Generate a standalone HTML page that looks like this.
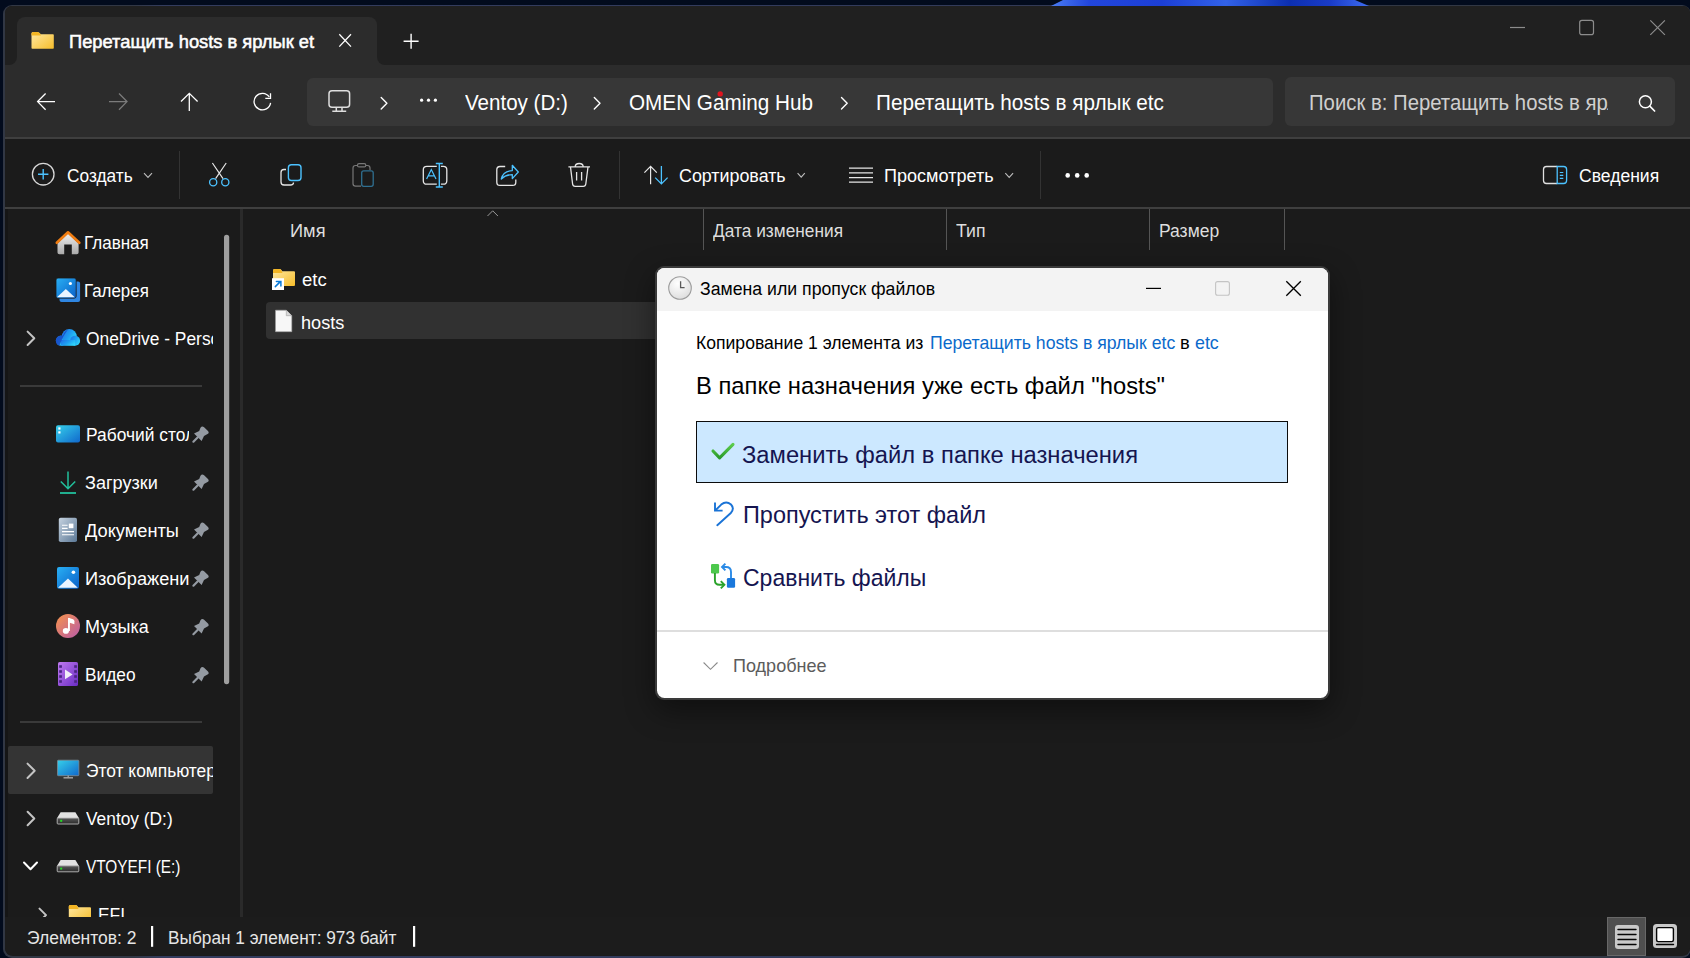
<!DOCTYPE html>
<html><head><meta charset="utf-8"><style>
*{margin:0;padding:0;box-sizing:border-box}
html,body{width:1690px;height:958px;overflow:hidden;background:#020b1d;font-family:"Liberation Sans",sans-serif}
.r{position:absolute}
.t{position:absolute;white-space:nowrap;line-height:1}
.t span{display:inline-block;transform-origin:0 0}
.ov{position:absolute;left:0;top:0}
</style></head><body>
<div class="r" style="left:3px;top:5px;width:1688px;height:953px;border-radius:9px;background:linear-gradient(90deg,#313744 0,#313744 130px,#333c5e 160px,#323b5c 900px,#313744 1400px)"></div>
<div class="r" style="left:1051px;top:0;width:318px;height:6px;background:linear-gradient(90deg,#4a7cf2 0,#2246dc 12%,#1c3fd6 35%,#3262e8 55%,#0c2fb0 75%,#1a3cc8 88%,#3d6cf0 100%);clip-path:polygon(0 100%,12px 0,304px 0,100% 100%)"></div>
<div class="r" style="left:5px;top:6px;width:1685px;height:950px;border-radius:7px 7px 8px 8px;background:#1b1b1b;overflow:hidden">
  <div class="r" style="left:0;top:0;width:1700px;height:59px;background:#202020"></div>
  <div class="r" style="left:0;top:59px;width:1700px;height:72px;background:#2c2c2c"></div>
  <div class="r" style="left:12px;top:11px;width:360px;height:60px;background:#2c2c2c;border-radius:8px 8px 0 0"></div>
  <div class="r" style="left:0;top:51px;width:12px;height:8px;background:#2c2c2c"></div>
  <div class="r" style="left:0;top:51px;width:12px;height:8px;background:#202020;border-radius:0 0 8px 0"></div>
  <div class="r" style="left:372px;top:51px;width:8px;height:8px;background:#2c2c2c"></div>
  <div class="r" style="left:372px;top:51px;width:8px;height:8px;background:#202020;border-radius:0 0 0 8px"></div>
  <div class="r" style="left:302px;top:72px;width:966px;height:48px;background:#373737;border-radius:6px"></div>
  <div class="r" style="left:1280px;top:71px;width:390px;height:48.5px;background:#373737;border-radius:6px"></div>
  <div class="r" style="left:0;top:131px;width:1700px;height:2px;background:#3f3f3f"></div>
  <div class="r" style="left:0;top:133px;width:1700px;height:68px;background:#1b1b1b"></div>
  <div class="r" style="left:173.5px;top:145px;width:1.3px;height:48px;background:#333333"></div>
  <div class="r" style="left:613.5px;top:145px;width:1.3px;height:48px;background:#333333"></div>
  <div class="r" style="left:1034.5px;top:145px;width:1.3px;height:48px;background:#333333"></div>
  <div class="r" style="left:0;top:201px;width:1700px;height:2px;background:#3f3f3f"></div>
  <div class="r" style="left:234.5px;top:203px;width:3.5px;height:708px;background:#2a2a2a"></div>
  <div class="r" style="left:697.9px;top:203px;width:1.2px;height:41px;background:#555"></div>
  <div class="r" style="left:941px;top:203px;width:1.2px;height:41px;background:#555"></div>
  <div class="r" style="left:1144px;top:203px;width:1.2px;height:41px;background:#555"></div>
  <div class="r" style="left:1279px;top:203px;width:1.2px;height:41px;background:#555"></div>
  <div class="r" style="left:261.2px;top:296.4px;width:400px;height:36.2px;background:#313131;border-radius:4px"></div>
  <div class="r" style="left:15px;top:379px;width:182px;height:2px;background:#3a3a3a"></div>
  <div class="r" style="left:15px;top:715px;width:182px;height:2px;background:#3a3a3a"></div>
  <div class="r" style="left:0;top:203px;width:3px;height:708px;background:#161616"></div>
  <div class="r" style="left:3px;top:739.8px;width:205px;height:47.8px;background:#343434;border-radius:2px"></div>
  <div class="r" style="left:0;top:911px;width:1700px;height:38px;background:#1c1c1c"></div>
</div>
<div class="r" style="left:3px;top:5px;width:0;height:0"></div>
<div class="t" id="tab" style="left:69.36px;top:32.93px;font-size:18.75px;color:#ffffff;font-weight:400;-webkit-text-stroke:0.55px #ffffff;"><span style="transform:scaleX(0.9761)">Перетащить hosts в ярлык et</span></div><div class="t" id="bc1" style="left:465.16px;top:91.55px;font-size:21.8px;color:#ffffff;font-weight:400;"><span style="transform:scaleX(0.9428)">Ventoy (D:)</span></div><div class="t" id="bc2" style="left:628.89px;top:91.55px;font-size:21.8px;color:#ffffff;font-weight:400;"><span style="transform:scaleX(0.9497)">OMEN Gaming Hub</span></div><div class="t" id="bc3" style="left:876.31px;top:91.55px;font-size:21.8px;color:#ffffff;font-weight:400;"><span style="transform:scaleX(0.9510)">Перетащить hosts в ярлык etc</span></div><div class="t" id="srch" style="left:1308.60px;top:93.09px;font-size:21.51px;color:#cfcfcf;font-weight:400;width:299.4px;overflow:hidden;"><span style="transform:scaleX(0.9450)">Поиск в: Перетащить hosts в ярлык etc</span></div><div class="t" id="tb1" style="left:67.15px;top:166.70px;font-size:18.9px;color:#ffffff;font-weight:400;"><span style="transform:scaleX(0.9150)">Создать</span></div><div class="t" id="tb2" style="left:679.31px;top:166.90px;font-size:18.9px;color:#ffffff;font-weight:400;"><span style="transform:scaleX(0.9451)">Сортировать</span></div><div class="t" id="tb3" style="left:884.15px;top:167.10px;font-size:18.9px;color:#ffffff;font-weight:400;"><span style="transform:scaleX(0.9561)">Просмотреть</span></div><div class="t" id="tb4" style="left:1578.68px;top:167.00px;font-size:18.9px;color:#ffffff;font-weight:400;"><span style="transform:scaleX(0.9288)">Сведения</span></div><div class="t" id="c1" style="left:289.89px;top:222.13px;font-size:18.75px;color:#dedede;font-weight:400;"><span style="transform:scaleX(0.9722)">Имя</span></div><div class="t" id="c2" style="left:713.16px;top:222.13px;font-size:18.75px;color:#dedede;font-weight:400;"><span style="transform:scaleX(0.9232)">Дата изменения</span></div><div class="t" id="c3" style="left:956.21px;top:222.13px;font-size:18.75px;color:#dedede;font-weight:400;"><span style="transform:scaleX(0.9435)">Тип</span></div><div class="t" id="c4" style="left:1158.89px;top:222.13px;font-size:18.75px;color:#dedede;font-weight:400;"><span style="transform:scaleX(0.9332)">Размер</span></div><div class="t" id="f1" style="left:301.68px;top:271.33px;font-size:18.75px;color:#ffffff;font-weight:400;"><span style="transform:scaleX(0.9853)">etc</span></div><div class="t" id="f2" style="left:301.36px;top:313.93px;font-size:18.75px;color:#ffffff;font-weight:400;"><span style="transform:scaleX(0.9671)">hosts</span></div><div class="t" id="s1" style="left:84.36px;top:234.00px;font-size:18.9px;color:#ffffff;font-weight:400;"><span style="transform:scaleX(0.9015)">Главная</span></div><div class="t" id="s2" style="left:84.36px;top:282.00px;font-size:18.9px;color:#ffffff;font-weight:400;"><span style="transform:scaleX(0.8945)">Галерея</span></div><div class="t" id="s3" style="left:85.80px;top:330.00px;font-size:18.9px;color:#ffffff;font-weight:400;width:127.2px;overflow:hidden;"><span style="transform:scaleX(0.9200)">OneDrive - Personal</span></div><div class="t" id="s4" style="left:86.00px;top:426.00px;font-size:18.9px;color:#ffffff;font-weight:400;width:103.0px;overflow:hidden;"><span style="transform:scaleX(0.9200)">Рабочий стол</span></div><div class="t" id="s5" style="left:84.89px;top:474.00px;font-size:18.9px;color:#ffffff;font-weight:400;"><span style="transform:scaleX(0.9569)">Загрузки</span></div><div class="t" id="s6" style="left:85.00px;top:522.00px;font-size:18.9px;color:#ffffff;font-weight:400;"><span style="transform:scaleX(0.9650)">Документы</span></div><div class="t" id="s7" style="left:84.89px;top:570.00px;font-size:18.9px;color:#ffffff;font-weight:400;width:103.8px;overflow:hidden;"><span style="transform:scaleX(0.9632)">Изображени</span></div><div class="t" id="s8" style="left:84.89px;top:618.00px;font-size:18.9px;color:#ffffff;font-weight:400;"><span style="transform:scaleX(0.9532)">Музыка</span></div><div class="t" id="s9" style="left:84.89px;top:666.00px;font-size:18.9px;color:#ffffff;font-weight:400;"><span style="transform:scaleX(0.9167)">Видео</span></div><div class="t" id="s10" style="left:85.50px;top:762.00px;font-size:18.9px;color:#ffffff;font-weight:400;width:127.5px;overflow:hidden;"><span style="transform:scaleX(0.9200)">Этот компьютер</span></div><div class="t" id="s11" style="left:85.58px;top:810.00px;font-size:18.9px;color:#ffffff;font-weight:400;"><span style="transform:scaleX(0.9173)">Ventoy (D:)</span></div><div class="t" id="s12" style="left:85.58px;top:858.00px;font-size:18.9px;color:#ffffff;font-weight:400;"><span style="transform:scaleX(0.8131)">VTOYEFI (E:)</span></div><div class="r" style="left:0;top:880px;width:240px;height:37px;overflow:hidden"><div class="t" id="s13" style="left:97.8px;top:26.00px;font-size:18.9px;color:#fff"><span style="transform:scaleX(0.92)">EFI</span></div></div><div class="t" id="st1" style="left:26.57px;top:928.80px;font-size:18.9px;color:#e6e6e6;font-weight:400;"><span style="transform:scaleX(0.9248)">Элементов: 2</span></div><div class="t" id="st2" style="left:167.94px;top:928.80px;font-size:18.9px;color:#e6e6e6;font-weight:400;"><span style="transform:scaleX(0.9131)">Выбран 1 элемент: 973 байт</span></div>

<svg class="ov" width="1690" height="958" viewBox="0 0 1690 958">
<defs>
 <linearGradient id="gFold" x1="0" y1="0" x2="1" y2="1"><stop offset="0" stop-color="#ffe9a6"/><stop offset="1" stop-color="#f6bd2a"/></linearGradient>
 <linearGradient id="gHome" x1="0" y1="0" x2="0" y2="1"><stop offset="0" stop-color="#efefef"/><stop offset="1" stop-color="#a9a9a9"/></linearGradient>
 <linearGradient id="gBlue" x1="0" y1="0" x2="1" y2="1"><stop offset="0" stop-color="#29b0f4"/><stop offset="1" stop-color="#0a5fc8"/></linearGradient>
 <linearGradient id="gDesk" x1="0" y1="0" x2="1" y2="1"><stop offset="0" stop-color="#36d0ea"/><stop offset="1" stop-color="#1068cc"/></linearGradient>
 <linearGradient id="gDoc" x1="0" y1="0" x2="1" y2="1"><stop offset="0" stop-color="#c6d3e0"/><stop offset="1" stop-color="#5b7896"/></linearGradient>
 <linearGradient id="gMus" x1="0" y1="0" x2="1" y2="1"><stop offset="0" stop-color="#f7944a"/><stop offset="1" stop-color="#b85aa8"/></linearGradient>
 <linearGradient id="gVid" x1="0" y1="0" x2="1" y2="1"><stop offset="0" stop-color="#c07af0"/><stop offset="1" stop-color="#6a2cc4"/></linearGradient>
 <linearGradient id="gCloud" x1="0" y1="0" x2="1" y2="0.6"><stop offset="0" stop-color="#1f6ee6"/><stop offset="0.55" stop-color="#1ea0f2"/><stop offset="1" stop-color="#2fd2f8"/></linearGradient>
 <linearGradient id="gDrv" x1="0" y1="0" x2="0" y2="1"><stop offset="0" stop-color="#5a5a5a"/><stop offset="1" stop-color="#2a2a2a"/></linearGradient>
</defs>
<!-- tab folder -->
<path d="M31.5 33.5 Q31.5 32 33 32 L37.5 32 Q39 32 40 33.5 L40.5 34.3 L53 34.3 Q53.8 34.3 53.8 35 L53.8 48 Q53.8 48.8 53 48.8 L32.3 48.8 Q31.5 48.8 31.5 48 Z" fill="url(#gFold)"/>
<path d="M31.5 33.5 Q31.5 32 33 32 L37.5 32 Q39 32 40 33.5 L41 35.6 L31.5 35.6 Z" fill="#f3b524"/>
<!-- tab close -->
<path d="M339.3 34.3 L351 46.6 M351 34.3 L339.3 46.6" stroke="#ffffff" stroke-width="1.3"/>
<path d="M403.6 41.2 L418.6 41.2 M411.1 33.7 L411.1 48.7" stroke="#ffffff" stroke-width="1.4"/>
<!-- window controls -->
<path d="M1510 27.5 L1525 27.5" stroke="#8c8c8c" stroke-width="1.2"/>
<rect x="1579.7" y="20.4" width="13.8" height="14.2" rx="2.2" fill="none" stroke="#8c8c8c" stroke-width="1.2"/>
<path d="M1650.3 20.3 L1664.9 34.9 M1664.9 20.3 L1650.3 34.9" stroke="#8c8c8c" stroke-width="1.2"/>
<!-- nav arrows -->
<path d="M37.6 101.6 L55 101.6 M45.6 93.5 L37.6 101.6 L45.6 109.7" fill="none" stroke="#ffffff" stroke-width="1.3"/>
<path d="M127 101.6 L109 101.6 M119 93.5 L127 101.6 L119 109.7" fill="none" stroke="#7b7b7b" stroke-width="1.3"/>
<path d="M189.3 111 L189.3 93.3 M181 101.5 L189.3 93.3 L197.6 101.5" fill="none" stroke="#ffffff" stroke-width="1.3"/>
<path d="M269.3 97 A8.3 8.3 0 1 0 270.6 102.8" fill="none" stroke="#ffffff" stroke-width="1.3"/>
<path d="M270.5 93.3 L270.5 98.3 L265.3 98.3" fill="none" stroke="#ffffff" stroke-width="1.3"/>
<!-- address bar -->
<rect x="329" y="90.8" width="20.6" height="16.4" rx="3" fill="none" stroke="#dedede" stroke-width="1.5"/>
<path d="M336.3 107.5 L336.3 110.5 M342 107.5 L342 110.5 M332.3 111.3 L346.2 111.3" stroke="#dedede" stroke-width="1.5"/>
<path d="M381.2 97.6 L386.90 103.30 L381.2 109.0" fill="none" stroke="#ffffff" stroke-width="1.4" stroke-linecap="round" stroke-linejoin="round"/>
<circle cx="421.6" cy="100.2" r="1.6" fill="#ffffff"/><circle cx="428.5" cy="100.2" r="1.6" fill="#ffffff"/><circle cx="435.4" cy="100.2" r="1.6" fill="#ffffff"/>
<path d="M594.3 97.6 L600.00 103.30 L594.3 109.0" fill="none" stroke="#ffffff" stroke-width="1.4" stroke-linecap="round" stroke-linejoin="round"/>
<path d="M841.5 97.6 L847.20 103.30 L841.5 109.0" fill="none" stroke="#ffffff" stroke-width="1.4" stroke-linecap="round" stroke-linejoin="round"/>
<circle cx="720.2" cy="93.9" r="2.7" fill="#e0141e"/>
<circle cx="1645.4" cy="101.8" r="6" fill="none" stroke="#ffffff" stroke-width="1.5"/>
<path d="M1649.8 106.2 L1654.6 111" stroke="#ffffff" stroke-width="1.7" stroke-linecap="round"/>
<!-- toolbar icons -->
<circle cx="43.2" cy="174.2" r="10.8" fill="none" stroke="#d8d8d8" stroke-width="1.3"/>
<path d="M43.2 169 L43.2 179.4 M38 174.2 L48.4 174.2" stroke="#4cc2ff" stroke-width="1.4"/>
<path d="M144 173.2 L148 177.4 L152 173.2" fill="none" stroke="#bdbdbd" stroke-width="1.1"/>
<path d="M212.4 163 L223 178.6 M226.2 163 L215.6 178.6" stroke="#e6e6e6" stroke-width="1.2"/>
<circle cx="213.2" cy="182.3" r="3.6" fill="none" stroke="#4cc2ff" stroke-width="1.3"/>
<circle cx="225.3" cy="182.3" r="3.6" fill="none" stroke="#4cc2ff" stroke-width="1.3"/>
<path d="M286 169.5 L284 169.5 Q281 169.5 281 172.5 L281 182 Q281 185 284 185 L290.5 185 Q293.5 185 293.5 182.5" fill="none" stroke="#e6e6e6" stroke-width="1.3"/>
<rect x="288.4" y="164.7" width="12.6" height="15.8" rx="3" fill="none" stroke="#4cc2ff" stroke-width="1.4"/>
<path d="M357 165.5 L355.5 165.5 Q353 165.5 353 168 L353 183.5 Q353 186.2 355.5 186.2 L361 186.2 M366 165.5 L367.5 165.5 Q370 165.5 370 168 L370 170" fill="none" stroke="#777777" stroke-width="1.2"/>
<rect x="357.5" y="163.7" width="8.3" height="3.2" rx="1.5" fill="none" stroke="#777777" stroke-width="1.2"/>
<rect x="361.7" y="170.8" width="11.5" height="15.5" rx="2" fill="none" stroke="#2f6f90" stroke-width="1.3"/>
<path d="M436.8 166.3 L426.8 166.3 Q423.3 166.3 423.3 169.8 L423.3 180.7 Q423.3 184.2 426.8 184.2 L436.8 184.2 M440.9 166.3 L443.3 166.3 Q446.8 166.3 446.8 169.8 L446.8 180.7 Q446.8 184.2 443.3 184.2 L440.9 184.2" fill="none" stroke="#e6e6e6" stroke-width="1.3"/>
<path d="M439.3 163.5 L439.3 187 M435.8 163.5 L442.8 163.5 M435.8 187 L442.8 187" stroke="#4cc2ff" stroke-width="1.4"/>
<path d="M426.6 179 L431.3 169.5 L436 179 M428.3 175.8 L434.4 175.8" fill="none" stroke="#4cc2ff" stroke-width="1.2"/>
<path d="M505.2 166.5 L500 166.5 Q496.8 166.5 496.8 169.7 L496.8 182.2 Q496.8 185.4 500 185.4 L512.6 185.4 Q515.8 185.4 515.8 182.2 L515.8 179.6" fill="none" stroke="#e6e6e6" stroke-width="1.3"/>
<path d="M501.3 179 Q503 171 512.3 170.6 L512.3 165.3 L518.3 172 L512.3 178.6 L512.3 174.6 Q505.5 174.6 501.3 179 Z" fill="none" stroke="#4cc2ff" stroke-width="1.3" stroke-linejoin="round"/>
<path d="M568.4 166.8 L590 166.8 M575.2 166.8 Q575.2 163.5 579.2 163.5 Q583.2 163.5 583.2 166.8" fill="none" stroke="#e6e6e6" stroke-width="1.3"/>
<path d="M570.5 167 L572.6 184 Q572.9 186.3 575.2 186.3 L583.2 186.3 Q585.5 186.3 585.8 184 L588 167" fill="none" stroke="#e6e6e6" stroke-width="1.3"/>
<path d="M576.6 172 L576.6 180.5 M581.6 172 L581.6 180.5" stroke="#e6e6e6" stroke-width="1.3"/>
<path d="M650.6 184.2 L650.6 166.2 M644.4 172.6 L650.6 166.3 L656.8 172.6" fill="none" stroke="#e6e6e6" stroke-width="1.2"/>
<path d="M661.4 166 L661.4 184 M655.2 177.6 L661.4 183.9 L667.6 177.6" fill="none" stroke="#4cc2ff" stroke-width="1.3"/>
<path d="M797.6 173.2 L801.2 177.2 L804.8 173.2" fill="none" stroke="#bdbdbd" stroke-width="1.1"/>
<path d="M849 168.2 L873 168.2 M849 172.9 L873 172.9 M849 177.6 L873 177.6 M849 182.2 L873 182.2" stroke="#e6e6e6" stroke-width="1.3"/>
<path d="M1005.3 173.2 L1009.2 177.4 L1013.1 173.2" fill="none" stroke="#bdbdbd" stroke-width="1.1"/>
<circle cx="1067.7" cy="175.4" r="2.3" fill="#ffffff"/><circle cx="1077.2" cy="175.4" r="2.3" fill="#ffffff"/><circle cx="1086.7" cy="175.4" r="2.3" fill="#ffffff"/>
<path d="M1557.2 166.5 L1546.5 166.5 Q1543.5 166.5 1543.5 169.5 L1543.5 180.5 Q1543.5 183.5 1546.5 183.5 L1557.2 183.5" fill="none" stroke="#e0e0e0" stroke-width="1.3"/>
<path d="M1557.2 166.5 L1563.6 166.5 Q1566.6 166.5 1566.6 169.5 L1566.6 180.5 Q1566.6 183.5 1563.6 183.5 L1557.2 183.5 Z" fill="none" stroke="#4cc2ff" stroke-width="1.3"/>
<path d="M1559.8 172.5 L1563.3 172.5 M1559.8 175.4 L1563.3 175.4 M1559.8 178.4 L1563.3 178.4" stroke="#4cc2ff" stroke-width="1.1"/>
<!-- column sort caret -->
<path d="M487.5 216 L492.7 210.8 L497.9 216" fill="none" stroke="#9a9a9a" stroke-width="1"/>
<!-- etc folder w/ shortcut -->
<path d="M273 270.5 Q273 269 274.5 269 L279.5 269 Q280.5 269 281.3 270 L282.3 271.3 L294 271.3 Q295 271.3 295 272.3 L295 285 Q295 286 294 286 L274 286 Q273 286 273 285 Z" fill="url(#gFold)"/>
<path d="M273 270.5 Q273 269 274.5 269 L279.5 269 Q280.5 269 281.3 270 L282.5 273 L273 273 Z" fill="#f3b524"/>
<rect x="272" y="278.2" width="12" height="11.8" fill="#ffffff"/>
<path d="M275.3 286.6 L280.3 281.6 M276.4 281.4 L280.9 281.4 L280.9 285.9" fill="none" stroke="#0a7ad8" stroke-width="1.5" stroke-linecap="round"/>
<!-- hosts file icon -->
<path d="M275.5 310.2 L286.3 310.2 L291.8 315.7 L291.8 331.7 L275.5 331.7 Z" fill="#f7f7f7" stroke="#9c9c9c" stroke-width="0.6"/>
<path d="M286.3 310.2 L286.3 315.7 L291.8 315.7" fill="#d8d8d8" stroke="#9c9c9c" stroke-width="0.6"/>
<!-- sidebar icons -->
<path d="M57.5 243.5 L57.5 252.5 Q57.5 254.3 59.3 254.3 L64.2 254.3 L64.2 244.4 L71.8 244.4 L71.8 254.3 L76.8 254.3 Q78.6 254.3 78.6 252.5 L78.6 243.5 L68 233.5 Z" fill="url(#gHome)"/>
<path d="M56.8 242.8 L68 232.3 L79.3 242.8" fill="none" stroke="#f07d12" stroke-width="2.6" stroke-linecap="round" stroke-linejoin="round"/>
<rect x="59.5" y="281.5" width="20.6" height="20.4" rx="2" fill="#2f86e2"/>
<rect x="56" y="278" width="20.2" height="20.2" rx="2" fill="url(#gBlue)" stroke="#1b1b1b" stroke-width="0.8"/>
<path d="M57 297.2 L65.8 289 L74.8 297.2 Z" fill="#eaf4ff"/>
<circle cx="70.4" cy="283.5" r="1.6" fill="#ffffff"/>
<g fill="url(#gCloud)"><circle cx="61" cy="340.6" r="5.2"/><circle cx="69.3" cy="336.6" r="7.5"/><circle cx="75.1" cy="340.8" r="5"/><rect x="61" y="340" width="14.2" height="5.8"/></g>
<path d="M57 337.6 Q59.5 335.2 63 335.6 Q64.5 331 68 329.4 Q62 337 59.5 345.6 Q56 345 55.9 341 Q56 339 57 337.6 Z" fill="#1642c0" opacity="0.75"/>
<path d="M27.6 331.6 L34.30 338.30 L27.6 345.0" fill="none" stroke="#c4c4c4" stroke-width="2" stroke-linecap="round" stroke-linejoin="round"/>
<rect x="56" y="425.2" width="24" height="17.2" rx="2" fill="url(#gDesk)"/>
<rect x="58.3" y="427.4" width="2.2" height="2.2" fill="#ffffff"/><rect x="58.3" y="431.3" width="2.2" height="2.2" fill="#ffffff"/>
<path d="M68 471.4 L68 488.8 M60.8 481.5 L68 488.8 L75.2 481.5" fill="none" stroke="#22c09c" stroke-width="1.5"/>
<path d="M60 493 L76 493" stroke="#22c09c" stroke-width="1.8"/>
<rect x="58.8" y="517.8" width="18.2" height="24.2" rx="1.8" fill="url(#gDoc)"/>
<path d="M62 525.3 L67.6 525.3 M62 528.4 L67.6 528.4 M62 531.6 L74 531.6 M62 534.7 L74 534.7" stroke="#ffffff" stroke-width="1.1"/>
<rect x="68.8" y="523.6" width="4.6" height="4.6" fill="#ffffff"/>
<rect x="57" y="567" width="22" height="21.8" rx="2" fill="url(#gBlue)"/>
<path d="M58 587.8 L68 578.6 L77.8 587.8 Z" fill="#eaf4ff"/>
<circle cx="73.4" cy="572.2" r="1.8" fill="#ffffff"/>
<circle cx="68" cy="626" r="12" fill="url(#gMus)"/>
<rect x="68" y="618" width="1.9" height="13" fill="#ffffff"/>
<path d="M68.5 617.8 L73 619.3 Q74.4 619.8 74.4 621.2 L74.4 624.2 L69 622.6 Z" fill="#ffffff"/>
<ellipse cx="65.9" cy="630.9" rx="3.1" ry="2.8" fill="#ffffff"/>
<rect x="58" y="662" width="20" height="24" rx="1.6" fill="url(#gVid)"/>
<g fill="#4a2482"><rect x="59.2" y="665.2" width="2.7" height="2.6"/><rect x="59.2" y="670.2" width="2.7" height="2.6"/><rect x="59.2" y="675.2" width="2.7" height="2.6"/><rect x="59.2" y="680.2" width="2.7" height="2.6"/><rect x="74.2" y="665.2" width="2.7" height="2.6"/><rect x="74.2" y="670.2" width="2.7" height="2.6"/><rect x="74.2" y="675.2" width="2.7" height="2.6"/><rect x="74.2" y="680.2" width="2.7" height="2.6"/></g>
<path d="M65 669.6 L72.6 674.4 L65 679.2 Z" fill="#f2eef8"/>
<g transform="translate(193,422)"><path d="M1 11.4 L6.2 9 L7.5 5.8 Q9 3.6 11.1 5.2 L15 8.9 Q16.6 10.8 14.5 12.1 L11 14 L8.6 19 Z" fill="#949aa2"/><path d="M4.8 15.3 L0.4 19.7" stroke="#949aa2" stroke-width="2.2" stroke-linecap="round"/></g><g transform="translate(193,470)"><path d="M1 11.4 L6.2 9 L7.5 5.8 Q9 3.6 11.1 5.2 L15 8.9 Q16.6 10.8 14.5 12.1 L11 14 L8.6 19 Z" fill="#949aa2"/><path d="M4.8 15.3 L0.4 19.7" stroke="#949aa2" stroke-width="2.2" stroke-linecap="round"/></g><g transform="translate(193,518)"><path d="M1 11.4 L6.2 9 L7.5 5.8 Q9 3.6 11.1 5.2 L15 8.9 Q16.6 10.8 14.5 12.1 L11 14 L8.6 19 Z" fill="#949aa2"/><path d="M4.8 15.3 L0.4 19.7" stroke="#949aa2" stroke-width="2.2" stroke-linecap="round"/></g><g transform="translate(193,566)"><path d="M1 11.4 L6.2 9 L7.5 5.8 Q9 3.6 11.1 5.2 L15 8.9 Q16.6 10.8 14.5 12.1 L11 14 L8.6 19 Z" fill="#949aa2"/><path d="M4.8 15.3 L0.4 19.7" stroke="#949aa2" stroke-width="2.2" stroke-linecap="round"/></g><g transform="translate(193,614.5)"><path d="M1 11.4 L6.2 9 L7.5 5.8 Q9 3.6 11.1 5.2 L15 8.9 Q16.6 10.8 14.5 12.1 L11 14 L8.6 19 Z" fill="#949aa2"/><path d="M4.8 15.3 L0.4 19.7" stroke="#949aa2" stroke-width="2.2" stroke-linecap="round"/></g><g transform="translate(193,662.5)"><path d="M1 11.4 L6.2 9 L7.5 5.8 Q9 3.6 11.1 5.2 L15 8.9 Q16.6 10.8 14.5 12.1 L11 14 L8.6 19 Z" fill="#949aa2"/><path d="M4.8 15.3 L0.4 19.7" stroke="#949aa2" stroke-width="2.2" stroke-linecap="round"/></g>
<path d="M27.5 763.6 L34.70 770.80 L27.5 778.0" fill="none" stroke="#c4c4c4" stroke-width="2" stroke-linecap="round" stroke-linejoin="round"/>
<rect x="57.5" y="760.2" width="21.4" height="15.5" rx="0.8" fill="url(#gDesk)" stroke="#7c8a94" stroke-width="0.8"/>
<path d="M63.5 777.8 L73 777.8" stroke="#a8a8a8" stroke-width="1.4"/>
<path d="M68.2 775.5 L68.2 777.5" stroke="#a8a8a8" stroke-width="1.2"/>
<path d="M27.6 811.8 L34.30 818.50 L27.6 825.1999999999999" fill="none" stroke="#c4c4c4" stroke-width="2" stroke-linecap="round" stroke-linejoin="round"/>
<path d="M57 818.2 L60.6 812.3 L75.4 812.3 L79 818.2 Z" fill="#e2e2e2"/>
<rect x="57.2" y="818" width="21.6" height="6" rx="0.8" fill="url(#gDrv)" stroke="#bdbdbd" stroke-width="0.9"/>
<rect x="60.2" y="819.8" width="2" height="2" fill="#22e022"/>
<path d="M24 862.5 L30.5 869.2 L37 862.5" fill="none" stroke="#ffffff" stroke-width="2" stroke-linecap="round" stroke-linejoin="round"/>
<path d="M57 866 L60.6 860.1 L75.4 860.1 L79 866 Z" fill="#e2e2e2"/>
<rect x="57.2" y="865.8" width="21.6" height="6" rx="0.8" fill="url(#gDrv)" stroke="#bdbdbd" stroke-width="0.9"/>
<rect x="60.2" y="867.6" width="2" height="2" fill="#22e022"/>
<g clip-path="url(#clipSB)">
<path d="M39.5 908.6 L46.00 915.10 L39.5 921.6" fill="none" stroke="#c4c4c4" stroke-width="2" stroke-linecap="round" stroke-linejoin="round"/>
<path d="M68.8 906.5 Q68.8 905 70.3 905 L75.5 905 Q76.5 905 77.3 906 L78.3 907.3 L90 907.3 Q91 907.3 91 908.3 L91 921 Q91 922 90 922 L69.8 922 Q68.8 922 68.8 921 Z" fill="url(#gFold)"/>
<path d="M68.8 906.5 Q68.8 905 70.3 905 L75.5 905 Q76.5 905 77.3 906 L78.5 909 L68.8 909 Z" fill="#f3b524"/>
</g>
<clipPath id="clipSB"><rect x="0" y="0" width="240" height="917"/></clipPath>
<!-- scrollbar -->
<rect x="224" y="234.7" width="5.2" height="449.5" rx="2.6" fill="#9f9f9f"/>
<!-- status bar -->
<rect x="151" y="926" width="2.2" height="20.8" fill="#ffffff"/>
<rect x="413" y="926" width="2.2" height="20.8" fill="#ffffff"/>
<rect x="1607.5" y="917.5" width="38" height="38" fill="#4f4f4f" stroke="#686868" stroke-width="1"/>
<rect x="1615" y="925" width="24" height="24" rx="3" fill="#c9c9c9"/>
<path d="M1618 929.5 L1636 929.5 M1618 934.5 L1636 934.5 M1618 939.5 L1636 939.5 M1618 944.5 L1636 944.5" stroke="#050505" stroke-width="1.4" stroke-linecap="round"/>
<rect x="1653" y="924" width="24" height="24" rx="3.5" fill="#c9c9c9"/>
<rect x="1656.6" y="927.6" width="16.8" height="14" rx="1.5" fill="#ffffff" stroke="#050505" stroke-width="1.4"/>
<path d="M1656.5 944.5 L1673.5 944.5" stroke="#050505" stroke-width="1.4" stroke-linecap="round"/>
</svg>

<div class="r" style="left:655px;top:266px;width:674.5px;height:434px;border-radius:9px;background:#3a3a3a;box-shadow:0 10px 30px rgba(0,0,0,0.45)"></div>
<div class="r" style="left:657px;top:268px;width:670.8px;height:430px;border-radius:7.5px;background:#ffffff;overflow:hidden">
  <div class="r" style="left:0;top:0;width:680px;height:43px;background:#f3f3f3"></div>
  <div class="r" style="left:39.2px;top:153.2px;width:592px;height:61.6px;background:#cce8ff;border:1.1px solid #0c0c0c"></div>
  <div class="r" style="left:0;top:362px;width:680px;height:1.6px;background:#dedede"></div>
</div>
<div class="t" id="d1" style="left:700.15px;top:280.96px;font-size:17.88px;color:#000000;font-weight:400;"><span style="transform:scaleX(0.9906)">Замена или пропуск файлов</span></div><div class="t" id="d2a" style="left:696.47px;top:334.69px;font-size:17.73px;color:#000000;font-weight:400;"><span style="transform:scaleX(0.9924)">Копирование 1 элемента из</span></div><div class="t" id="d2b" style="left:929.68px;top:334.69px;font-size:17.73px;color:#0b6acb;font-weight:400;"><span style="transform:scaleX(0.9967)">Перетащить hosts в ярлык etc</span></div><div class="t" id="d2c" style="left:1179.89px;top:334.69px;font-size:17.73px;color:#000000;font-weight:400;"><span style="transform:scaleX(1.0299)">в</span></div><div class="t" id="d2d" style="left:1194.52px;top:334.69px;font-size:17.73px;color:#0b6acb;font-weight:400;"><span style="transform:scaleX(1.0052)">etc</span></div><div class="t" id="d3" style="left:695.78px;top:374.26px;font-size:24.27px;color:#000000;font-weight:400;"><span style="transform:scaleX(0.9790)">В папке назначения уже есть файл "hosts"</span></div><div class="t" id="o1" style="left:742.36px;top:442.60px;font-size:23.98px;color:#151550;font-weight:400;"><span style="transform:scaleX(0.9909)">Заменить файл в папке назначения</span></div><div class="t" id="o2" style="left:742.78px;top:504.46px;font-size:23.55px;color:#151550;font-weight:400;"><span style="transform:scaleX(0.9958)">Пропустить этот файл</span></div><div class="t" id="o3" style="left:743.10px;top:566.56px;font-size:23.55px;color:#151550;font-weight:400;"><span style="transform:scaleX(0.9762)">Сравнить файлы</span></div><div class="t" id="d4" style="left:733.10px;top:657.06px;font-size:18.6px;color:#5c5c5c;font-weight:400;"><span style="transform:scaleX(0.9697)">Подробнее</span></div>

<svg class="ov" width="1690" height="958" viewBox="0 0 1690 958">
<defs>
 <radialGradient id="gClk" cx="0.4" cy="0.3" r="0.8"><stop offset="0" stop-color="#ffffff"/><stop offset="1" stop-color="#dadada"/></radialGradient>
 <linearGradient id="gChk" x1="0" y1="0" x2="0" y2="1"><stop offset="0" stop-color="#5ccc4c"/><stop offset="1" stop-color="#2a9a2a"/></linearGradient>
</defs>
<circle cx="680" cy="288" r="11.3" fill="url(#gClk)" stroke="#9c9c9c" stroke-width="1.1"/>
<path d="M680.6 281.3 L680.6 287.6 L684.6 287.6" fill="none" stroke="#5a5a5a" stroke-width="1.3"/>
<path d="M1146 288.4 L1161 288.4" stroke="#000" stroke-width="1.2"/>
<rect x="1215.6" y="281.6" width="13.8" height="13.6" rx="2" fill="none" stroke="#c4c4c4" stroke-width="1.1"/>
<path d="M1286.3 281.2 L1300.8 295.8 M1300.8 281.2 L1286.3 295.8" stroke="#000" stroke-width="1.3"/>
<path d="M713 451 L719.6 457.8 L733 444.3" fill="none" stroke="url(#gChk)" stroke-width="3.1" stroke-linecap="round" stroke-linejoin="round"/>
<path d="M715 502.6 L715 510.6 L722.6 510.6" fill="none" stroke="#1a73d6" stroke-width="1.9" stroke-linejoin="miter"/>
<path d="M715.8 510 L721.2 504.6 Q726.2 500.4 731 504.5 Q734.8 508.6 730.8 513 L717.3 525.2" fill="none" stroke="#1a73d6" stroke-width="1.9" stroke-linecap="round"/>
<rect x="711" y="563.9" width="8.1" height="9.6" rx="1.3" fill="#4cc84c"/>
<rect x="726.9" y="578" width="8.2" height="9.7" rx="1.3" fill="#1a78dc"/>
<path d="M714.9 573 L714.9 580 Q714.9 584.8 719.5 584.8 L723.8 584.8" fill="none" stroke="#2aa22a" stroke-width="1.9"/>
<path d="M720.8 581.2 L724.4 584.8 L720.8 588.4" fill="none" stroke="#2aa22a" stroke-width="1.9" stroke-linejoin="miter"/>
<path d="M731 578.2 L731 572 Q731 567 726 567 L722.5 567" fill="none" stroke="#2a8ae6" stroke-width="1.9"/>
<path d="M725.4 563.6 L722 567 L725.4 570.4" fill="none" stroke="#2a8ae6" stroke-width="1.9" stroke-linejoin="miter"/>
<path d="M703.6 662.5 L710.5 669.3 L717.5 662.5" fill="none" stroke="#8a8a8a" stroke-width="1.1"/>
</svg>

</body></html>
